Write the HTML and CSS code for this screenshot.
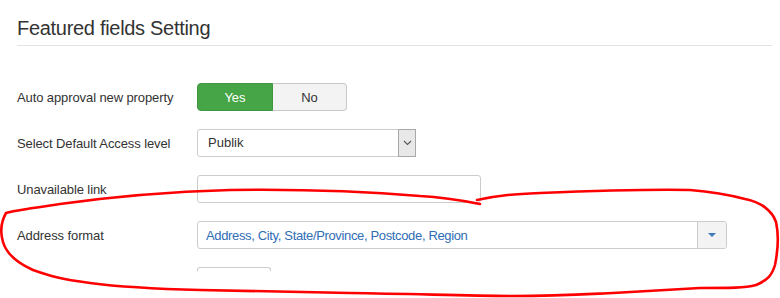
FILE: index.html
```html
<!DOCTYPE html>
<html lang="en">
<head>
    <meta charset="UTF-8">
    <title>Featured fields Setting</title>
    <link rel="stylesheet" href="styles.css">
</head>
<body>
    <div class="page">
        <h2 class="section-title">Featured fields Setting</h2>

        <div class="control-group">
            <label class="control-label">Auto approval new property</label>
            <div class="btn-group">
                <span class="btn btn-yes">Yes</span>
                <span class="btn btn-no">No</span>
            </div>
        </div>

        <div class="control-group">
            <label class="control-label">Select Default Access level</label>
            <div class="select-box">
                <span class="select-value">Publik</span>
                <span class="select-arrow">
                    <svg width="9" height="6" viewBox="0 0 9 6"><path d="M1 1 L4.5 4.5 L8 1" fill="none" stroke="#555" stroke-width="1.1"/></svg>
                </span>
            </div>
        </div>

        <div class="control-group">
            <label class="control-label">Unavailable link</label>
            <div class="text-input wide"></div>
        </div>

        <div class="control-group">
            <label class="control-label">Address format</label>
            <div class="chzn-box">
                <span class="chzn-value">Address, City, State/Province, Postcode, Region</span>
                <span class="chzn-arrow"><span class="caret"></span></span>
            </div>
        </div>

        <div class="control-group last">
            <label class="control-label"></label>
            <div class="text-input small"></div>
        </div>
    </div>

    <svg class="scribble" width="780" height="298" viewBox="0 0 780 298">
        <path d="M480 204 C455 199 440 197 420 196 C360 191 300 189 230 190 C160 192 110 197 60 204 C35 208 15 210 6 213 C1 222 0 232 3 242 C6 252 15 262 33 270 C50 276 60 279 90 283 C120 287 160 289 200 290 C260 291 300 292 350 293 C420 294 470 296 513 296 C560 296 590 294 613 293 C650 291 680 289 700 288 C730 288 745 288 756 285 C768 280 772 275 775 265 C778 250 779 235 776 222 C772 210 760 202 745 199 C730 195 715 192 690 190 C640 189 590 191 540 193 C515 194 500 195 477 200" fill="none" stroke="#ff0000" stroke-width="2.6" stroke-linecap="round" stroke-linejoin="round"/>
    </svg>
</body>
</html>
```

FILE: styles.css
```css
body {
    margin: 0;
    font-family: "Liberation Sans", Arial, sans-serif;
    font-size: 13px;
    color: #333;
    background: #fff;
    overflow: hidden;
}
.page {
    width: 755px;
    height: 298px;
    padding: 16px 0 0 17px;
    box-sizing: border-box;
    width: 772px;
}
.section-title {
    margin: 0 0 37px;
    padding-bottom: 5px;
    border-bottom: 1px solid #e3e3e3;
    font-size: 20px;
    font-weight: normal;
    line-height: 24px;
    letter-spacing: -0.3px;
    color: #333;
}
.control-group {
    display: flex;
    align-items: center;
    margin-bottom: 18px;
}
.control-group.last {
    margin-bottom: 0;
}
.control-label {
    width: 180px;
    flex: none;
    letter-spacing: -0.1px;
}
.btn-group {
    display: flex;
    height: 28px;
}
.btn {
    display: flex;
    align-items: center;
    justify-content: center;
    box-sizing: border-box;
    height: 28px;
}
.btn-yes {
    width: 76px;
    background: #46a546;
    border: 1px solid #3f983f;
    border-radius: 4px 0 0 4px;
    color: #fff;
}
.btn-no {
    width: 74px;
    background: #f3f3f3;
    border: 1px solid #c8c8c8;
    border-left: none;
    border-radius: 0 4px 4px 0;
    color: #333;
}
.select-box {
    display: flex;
    box-sizing: border-box;
    width: 219px;
    height: 28px;
    border: 1px solid #ccc;
    border-radius: 3px;
}
.select-value {
    flex: 1;
    padding-left: 10px;
    line-height: 26px;
}
.select-arrow {
    display: flex;
    align-items: center;
    justify-content: center;
    width: 16px;
    margin: -1px -1px -1px 0;
    background: #e8e8e8;
    border: 1px solid #a8a8a8;
}
.text-input {
    box-sizing: border-box;
    height: 28px;
    border: 1px solid #ccc;
    border-radius: 3px;
}
.text-input.wide {
    width: 284px;
}
.text-input.small {
    width: 74px;
    height: 4px;
    align-self: flex-start;
    border-bottom: none;
    border-radius: 3px 3px 0 0;
}
.chzn-box {
    display: flex;
    box-sizing: border-box;
    width: 530px;
    height: 28px;
    border: 1px solid #ccc;
    border-radius: 3px;
}
.chzn-value {
    flex: 1;
    padding-left: 8px;
    line-height: 27px;
    letter-spacing: -0.35px;
    color: #2f6db5;
}
.chzn-arrow {
    display: flex;
    align-items: center;
    justify-content: center;
    width: 28px;
    background: #f3f3f3;
    border-left: 1px solid #ccc;
    border-radius: 0 3px 3px 0;
}
.caret {
    width: 0;
    height: 0;
    border-left: 4px solid transparent;
    border-right: 4px solid transparent;
    border-top: 4px solid #3a79bd;
}
.scribble {
    position: absolute;
    left: 0;
    top: 0;
    pointer-events: none;
}
```
